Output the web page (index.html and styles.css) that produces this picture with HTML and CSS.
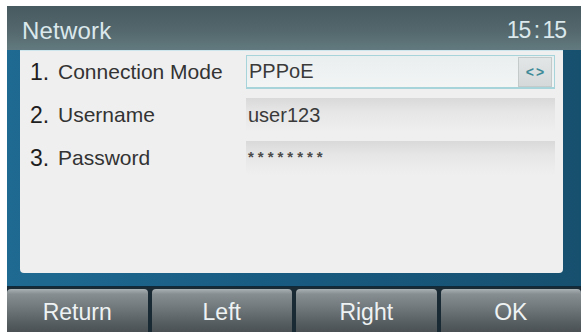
FILE: index.html
```html
<!DOCTYPE html>
<html>
<head>
<meta charset="utf-8">
<link rel="stylesheet" href="styles.css">
</head>
<body>
<div class="device">
  <div class="titlebar">
    <span class="title">Network</span>
    <span class="clock">15 : 15</span>
  </div>
  <div class="frame">
    <div class="panel">
      <div class="row">
        <span class="num">1.</span><span class="label">Connection Mode</span>
        <div class="field selected"><span class="value">PPPoE</span><span class="switch">&lt;&gt;</span></div>
      </div>
      <div class="row">
        <span class="num">2.</span><span class="label">Username</span>
        <div class="field"><span class="value">user123</span></div>
      </div>
      <div class="row">
        <span class="num">3.</span><span class="label">Password</span>
        <div class="field"><span class="value stars">********</span></div>
      </div>
    </div>
  </div>
  <div class="softkeys">
    <div class="key">Return</div>
    <div class="key">Left</div>
    <div class="key">Right</div>
    <div class="key">OK</div>
  </div>
</div>
</body>
</html>
```
FILE: styles.css
```css
html, body {
  margin: 0;
  padding: 0;
  background: #ffffff;
}
body {
  width: 585px;
  height: 332px;
  overflow: hidden;
  font-family: "Liberation Sans", Arial, sans-serif;
}
.device {
  margin: 6px 0 0 7px;
  width: 574px;
  height: 326px;
  display: flex;
  flex-direction: column;
  background: #1a2a34;
}
.titlebar {
  height: 44px;
  flex: none;
  display: flex;
  align-items: center;
  justify-content: space-between;
  padding: 5px 15px 0 15px;
  box-sizing: border-box;
  background: linear-gradient(#475a5f, #53676c 55%, #627a7f);
  color: #dbe8ec;
  font-size: 24px;
}
.title { letter-spacing: 0.2px; }
.clock { font-size: 23px; letter-spacing: -1px; word-spacing: -2px; }
.frame {
  height: 223px;
  flex: none;
  padding: 0 18px 13px 13px;
  background: linear-gradient(90deg, #1f6a92, #185a80 50%, #17506f);
  border-bottom: 1px solid #0f2a3a;
}
.panel {
  height: 100%;
  background: #efefef;
  border-top: 1px solid #cde6ee;
  border-radius: 0 0 4px 4px;
  box-sizing: border-box;
  padding: 4px 8px 0 10px;
  display: flex;
  flex-direction: column;
  gap: 9px;
}
.row {
  display: flex;
  align-items: center;
  height: 34px;
}
.num {
  width: 28px;
  font-size: 23px;
  color: #1e1e1e;
}
.label {
  width: 188px;
  font-size: 21px;
  color: #333;
}
.field {
  width: 309px;
  height: 34px;
  box-sizing: border-box;
  display: flex;
  align-items: center;
  justify-content: space-between;
  padding: 0 2px 0 2px;
  background: linear-gradient(#d9d9d9, #e6e6e6 40%, #efefef);
}
.field.selected {
  background: linear-gradient(#e9eeee, #f3f5f5);
  border: 1px solid #a7d3da;
  border-bottom-width: 2px;
}
.value {
  font-size: 20px;
  color: #3a3a3a;
}
.stars {
  font-size: 15px;
  font-weight: bold;
  letter-spacing: 4px;
  color: #4a4a4a;
  align-self: flex-start;
  padding-top: 7px;
}
.switch {
  width: 34px;
  height: 30px;
  box-sizing: border-box;
  border: 1px solid #c4c9c9;
  background: linear-gradient(#e3e6e6, #d5d9d9);
  color: #3f8a98;
  font-size: 14px;
  font-weight: bold;
  display: flex;
  align-items: center;
  justify-content: center;
  letter-spacing: 2px;
  padding-left: 2px;
}
.softkeys {
  flex: 1;
  display: grid;
  grid-template-columns: repeat(4, 1fr);
  gap: 4px;
  padding-top: 2px;
}
.key {
  border-radius: 4px 4px 0 0;
  background: linear-gradient(#aab1b4, #878e92 12%, #6f777b 45%, #565d61 80%, #4a5054);
  color: #eef2f3;
  font-size: 23px;
  display: flex;
  align-items: center;
  justify-content: center;
  padding-top: 4px;
}
```
